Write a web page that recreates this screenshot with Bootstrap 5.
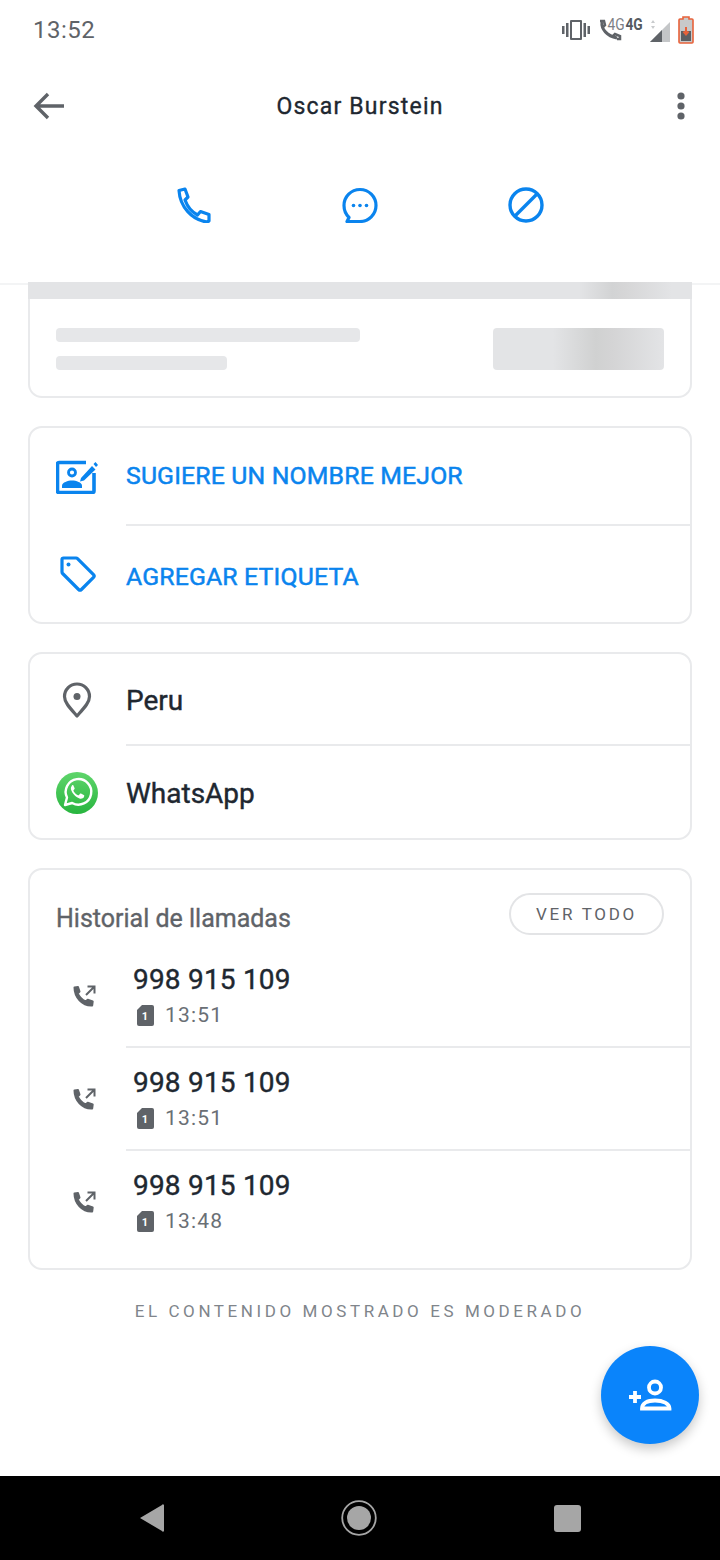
<!DOCTYPE html>
<html lang="es">
<head>
  <meta charset="UTF-8" />
  <meta name="viewport" content="width=device-width, initial-scale=1.0" />
  <title>Oscar Burstein</title>
  <link href="https://cdn.jsdelivr.net/npm/bootstrap@5.3.3/dist/css/bootstrap.min.css" rel="stylesheet" />
  <style>
    html, body { height: 100%; }
    body { width: 720px; height: 1560px; overflow: hidden; font-family: Roboto, "Liberation Sans", sans-serif; color: #202730; background: #fff; }
    .screen { width: 720px; height: 1560px; position: relative; }
    /* barra de estado */
    .status-bar { height: 60px; padding: 0 26px 0 33px; color: #5f6368; }
    .status-time { font-size: 24px; letter-spacing: .5px; }
    .tiny-4g { font-size: 16px; line-height: 1; font-family: Roboto, sans-serif; transform: scaleX(.86); }
    .bold-4g { font-weight: 700; color: #555a60; margin-top: -11px; margin-left: -2px; margin-right: 3px; }
    .thin-4g { margin-top: -10px; margin-left: -16px; margin-right: 0; color: #7c8085; }
    .battery-icon { margin-left: 5px; }
    /* cabecera */
    .top-head { height: 225px; border-bottom: 2px solid #f3f4f5; }
    .title-row { height: 92px; padding: 0 35px 0 33px; }
    .head-side { width: 40px; }
    .contact-name { font-size: 23px; font-weight: 400; -webkit-text-stroke: .35px #202730; letter-spacing: 1.2px; margin: 0 0 0 2px; line-height: 1; }
    .action-row { height: 106px; }
    .action-cell { width: 166px; }
    /* tarjetas */
    .content-area { padding: 0 28px; margin-top: -3px; position: relative; }
    .sheet { border: 2px solid #e9eaec; border-radius: 14px; margin-bottom: 28px; background: #fff; }
    .sheet-skeleton { border-top: 0; border-radius: 0 0 14px 14px; height: 116px; }
    .skel-bar { height: 17px; margin: 0 -2px; background: linear-gradient(90deg, #e3e4e6 83%, #d2d3d4 88%, #d6d6d7 90%, #e3e4e6 97%); }
    .skel-body { padding: 29px 26px 0; }
    .skel-line { height: 14px; border-radius: 4px; background: #e6e7e9; }
    .skel-long { width: 304px; margin-bottom: 14px; }
    .skel-short { width: 171px; }
    .skel-block { width: 171px; height: 42px; border-radius: 4px; background: linear-gradient(90deg, #e3e4e6 35%, #d0d1d1 60%, #d4d4d5 70%, #e3e4e6 100%); }
    .row-icon { width: 96px; padding-left: 26px; flex: none; }
    .row-body { flex-grow: 1; border-bottom: 2px solid #e9eaec; }
    .sheet-row:last-child .row-body { border-bottom: 0; }
    .row-link { height: 98px; }
    .row-link:last-child { height: 96px; }
    .row-link:last-child .row-body { padding-top: 5px; }
    .row-info { height: 92px; }
    .link-blue { color: #0a84ee; font-size: 24.8px; font-weight: 400; -webkit-text-stroke: .5px #0a84ee; letter-spacing: .16px; }
    .info-text { font-size: 28px; color: #202730; font-weight: 400; -webkit-text-stroke: .4px #202730; padding-top: 3px; }
    .row-info:last-child .row-icon svg { margin-top: 2px; }
    /* historial */
    .sheet-calls { padding-bottom: 14px; margin-bottom: 33px; }
    .calls-head { padding: 24px 26px 0; height: 75px; }
    .calls-title { font-size: 25px; color: #5f6368; font-weight: 400; -webkit-text-stroke: .35px #5f6368; margin: 0; line-height: 1; margin-top: 12px; }
    .btn-ver { border: 2px solid #e3e4e6; border-radius: 21px; height: 42px; width: 155px; font-size: 17px; letter-spacing: 2.7px; color: #5f6368; background: #fff; padding: 2px 0 0; margin-top: -1px; }
    .row-call { height: 103px; }
    .call-icon { width: 96px; padding-left: 42px; flex: none; }
    .call-icon svg { margin-top: -2px; }
    .call-body { flex-grow: 1; border-bottom: 2px solid #e9eaec; padding-left: 7px; }
    .row-call:last-child .call-body { border-bottom: 0; }
    .call-number { font-size: 28px; font-weight: 400; -webkit-text-stroke: .4px #202730; letter-spacing: .2px; line-height: 1; color: #202730; padding-top: 21px; }
    .call-time { font-size: 21px; letter-spacing: 1.2px; color: #6a6f75; line-height: 1; margin-top: 11px; }
    .sim-chip { width: 17px; height: 21px; margin-left: 4px; margin-right: 11px; flex: none; }
    .moderated { font-size: 17px; letter-spacing: 3.58px; color: #80858b; text-align: center; line-height: 1; margin: 0; }
    /* boton flotante */
    .fab-add { position: absolute; left: 601px; top: 1346px; width: 98px; height: 98px; border-radius: 50%; background: #0a84fb; border: 0; padding: 0; box-shadow: 0 5px 12px rgba(0,0,0,.22); }
    /* barra de navegacion */
    .nav-bottom { position: absolute; left: 0; right: 0; bottom: 0; height: 84px; background: #000; gap: 177px; }
  </style>
</head>
<body>
  <div class="screen">
    <!-- Barra de estado -->
    <div class="status-bar d-flex align-items-center justify-content-between">
      <span class="status-time">13:52</span>
      <div class="d-flex align-items-center">
        <svg width="28" height="22" viewBox="0 0 28 22" fill="#5f6368"><rect x="0" y="7" width="2.5" height="8"/><rect x="25.5" y="7" width="2.5" height="8"/><rect x="4" y="4" width="2.5" height="14"/><rect x="21.5" y="4" width="2.5" height="14"/><path d="M9 1h10a1 1 0 0 1 1 1v18a1 1 0 0 1-1 1H9a1 1 0 0 1-1-1V2a1 1 0 0 1 1-1zm1 2v16h8V3z" fill-rule="evenodd"/></svg>
        <svg class="ms-2" width="24" height="24" viewBox="0 0 24 24" fill="none" stroke="#5f6368" stroke-width="3"><path d="M4 4c-1 7 5 14 15 16"/><path d="M2 3h4l1 4-2 2M15 18l2-2 5 2v3h-3" stroke-width="2.5"/></svg>
        <span class="tiny-4g thin-4g">4G</span>
        <span class="tiny-4g bold-4g">4G</span>
        <svg width="26" height="26" viewBox="0 0 26 26"><path d="M3 25 23 5v20z" fill="#c4c6c8"/><path d="M3 25 15 13v12z" fill="#5f6368"/><path d="M6 3l2 3H4zM6 12l2-3H4z" fill="#c9cbcd"/></svg>
        <svg class="battery-icon" width="16" height="28" viewBox="0 0 16 28"><path d="M5 1h6v2h3a1 1 0 0 1 1 1v22a1 1 0 0 1-1 1H2a1 1 0 0 1-1-1V4a1 1 0 0 1 1-1h3z" fill="#c8c9ca" stroke="#e8623a" stroke-width="1.6"/><rect x="3" y="15" width="10" height="10" fill="#5c5f63"/><path d="M8 11v7M5.5 15.5 8 18.5l2.5-3" stroke="#e8623a" stroke-width="2" fill="none"/></svg>
      </div>
    </div>

    <!-- Cabecera del contacto -->
    <div class="top-head">
      <div class="title-row d-flex align-items-center justify-content-between">
        <div class="head-side d-flex justify-content-start">
          <svg width="32" height="28" viewBox="0 0 32 28" fill="none" stroke="#5f6368" stroke-width="3.400"><path d="M31 14H3M15 2 3 14l12 12"/></svg>
        </div>
        <h1 class="contact-name">Oscar Burstein</h1>
        <div class="head-side d-flex justify-content-end">
          <svg width="8" height="28" viewBox="0 0 8 28" fill="#5f6368"><circle cx="4" cy="4" r="3.6"/><circle cx="4" cy="14" r="3.6"/><circle cx="4" cy="24" r="3.6"/></svg>
        </div>
      </div>
      <div class="action-row d-flex align-items-center justify-content-center">
        <div class="action-cell d-flex justify-content-center">
          <svg width="34" height="36" viewBox="0 0 34 36" fill="none" stroke="#0a84ee" stroke-width="3.200" stroke-linejoin="round"><path d="M2 3.500 8 2l3 8-3 3c2.500 7 7 12 12.500 15l3-3.500 8.500 3v6.500l-2 1C15 33 3 20 2 3.500z"/></svg>
        </div>
        <div class="action-cell d-flex justify-content-center">
          <svg width="36" height="36" viewBox="0 0 36 36" fill="none" stroke="#0a84ee" stroke-width="3.200"><path d="M5 34.500h13a16 16 0 1 0-16-16c0 5 2 9 5 12z" stroke-linejoin="round"/><g fill="#0a84ee" stroke="none"><circle cx="11.500" cy="18.500" r="1.800"/><circle cx="18" cy="18.500" r="1.800"/><circle cx="24.500" cy="18.500" r="1.800"/></g></svg>
        </div>
        <div class="action-cell d-flex justify-content-center">
          <svg width="36" height="36" viewBox="0 0 36 36" fill="none" stroke="#0a84ee" stroke-width="3.400"><circle cx="18" cy="18" r="16"/><path d="M7 29 29 7"/></svg>
        </div>
      </div>
    </div>

    <div class="content-area">
      <!-- Tarjeta en carga -->
      <div class="sheet sheet-skeleton">
        <div class="skel-bar"></div>
        <div class="skel-body d-flex justify-content-between">
          <div>
            <div class="skel-line skel-long"></div>
            <div class="skel-line skel-short"></div>
          </div>
          <div class="skel-block"></div>
        </div>
      </div>

      <!-- Acciones -->
      <div class="sheet">
        <div class="sheet-row row-link d-flex">
          <div class="row-icon d-flex align-items-center">
            <svg width="42" height="34" viewBox="0 0 42 34" fill="none"><path d="M30 2.500H3a1.500 1.500 0 0 0-1.500 1.500v27A1.500 1.500 0 0 0 3 32.500h33.500a1.500 1.500 0 0 0 1.500-1.500V13" stroke="#0a84ee" stroke-width="3.600"/><circle cx="16" cy="12.500" r="3.500" stroke="#0a84ee" stroke-width="2.800"/><path d="M6 28v-2.500c0-3 6-5 10-5s10 2 10 5V28z" fill="#0a84ee"/><path d="M25 18 36 6l3.500 3.500L28 20.500l-4 1zM37.500 4l2-2 2.500 3-2 2z" fill="#0a84ee"/></svg>
          </div>
          <div class="row-body link-blue d-flex align-items-center">SUGIERE UN NOMBRE MEJOR</div>
        </div>
        <div class="sheet-row row-link d-flex">
          <div class="row-icon d-flex align-items-center">
            <svg class="ms-1" width="36" height="36" viewBox="0 0 36 36" fill="none" stroke="#0a84ee" stroke-width="3.200" stroke-linejoin="round"><path d="M3.500 2h12.500a2 2 0 0 1 1.500.6l16 16a2 2 0 0 1 0 2.800L21.400 33.500a2 2 0 0 1-2.800 0l-16-16A2 2 0 0 1 2 16V3.500A1.500 1.500 0 0 1 3.500 2z"/><circle cx="8.500" cy="8.500" r="2" fill="#0a84ee" stroke="none"/></svg>
          </div>
          <div class="row-body link-blue d-flex align-items-center">AGREGAR ETIQUETA</div>
        </div>
      </div>

      <!-- Informacion -->
      <div class="sheet">
        <div class="sheet-row row-info d-flex">
          <div class="row-icon d-flex align-items-center">
            <svg class="icon-pin" width="42" height="36" viewBox="0 0 42 36" fill="none"><path d="M21 34C14 26 8.500 20.500 8.500 14.500a12.500 12.500 0 0 1 25 0C33.500 20.500 28 26 21 34z" stroke="#5f6368" stroke-width="3.200" stroke-linejoin="round"/><circle cx="21" cy="14.500" r="3.500" fill="#5f6368"/></svg>
          </div>
          <div class="row-body info-text d-flex align-items-center">Peru</div>
        </div>
        <div class="sheet-row row-info d-flex">
          <div class="row-icon d-flex align-items-center">
            <svg width="42" height="42" viewBox="0 0 42 42"><defs><linearGradient id="waGreen" x1="0" y1="0" x2="0" y2="1"><stop offset="0" stop-color="#5fd56b"/><stop offset="1" stop-color="#28b53f"/></linearGradient></defs><circle cx="21" cy="21" r="21" fill="url(#waGreen)"/><path d="M9 33l2-7.500A12.800 12.800 0 1 1 16.200 31z" fill="none" stroke="#fff" stroke-width="2.400" stroke-linejoin="round"/><path d="M16.500 13.500c-1 .5-2 2-1.500 4 1 3.500 4.500 7.500 8.500 9 2 .7 3.800-.3 4.500-1.500.3-.8.300-1.500.2-1.800l-3.200-1.700c-.5-.2-.8 0-1 .3l-1 1.300c-.3.300-.6.300-1 .2-2-.9-3.500-2.400-4.500-4.300-.2-.4 0-.7.200-.9l.8-1c.2-.3.200-.6.100-.9l-1.300-3c-.2-.3-.6-.4-1.800.3z" fill="#fff"/></svg>
          </div>
          <div class="row-body info-text d-flex align-items-center">WhatsApp</div>
        </div>
      </div>

      <!-- Historial de llamadas -->
      <div class="sheet sheet-calls">
        <div class="calls-head d-flex justify-content-between align-items-start">
          <h2 class="calls-title">Historial de llamadas</h2>
          <button type="button" class="btn btn-ver">VER TODO</button>
        </div>
        <div id="callList"></div>
      </div>

      <p class="moderated">EL CONTENIDO MOSTRADO ES MODERADO</p>
    </div>

    <!-- Boton flotante -->
    <button type="button" class="fab-add d-flex align-items-center justify-content-center" aria-label="Agregar contacto">
      <svg width="44" height="32" viewBox="0 0 44 32" fill="none" stroke="#fff" stroke-width="3.800"><path d="M1 18h12M7 12v12"/><circle cx="27" cy="8.500" r="6"/><path d="M14 29.500c0-5 5-8 13-8s14.500 3 14.500 8z"/></svg>
    </button>

    <!-- Barra de navegacion -->
    <div class="nav-bottom d-flex align-items-center justify-content-center">
      <svg width="25" height="28" viewBox="0 0 25 28" fill="#a6a6a6"><path d="M1 14 23 1a1 1 0 0 1 2 1v24a1 1 0 0 1-2 1z"/></svg>
      <svg width="36" height="36" viewBox="0 0 36 36"><circle cx="18" cy="18" r="16.800" fill="none" stroke="#a6a6a6" stroke-width="1.800"/><circle cx="18" cy="18" r="12" fill="#a6a6a6"/></svg>
      <svg width="27" height="27" viewBox="0 0 27 27"><rect width="27" height="27" rx="3" fill="#a6a6a6"/></svg>
    </div>
  </div>

  <script src="https://cdn.jsdelivr.net/npm/bootstrap@5.3.3/dist/js/bootstrap.bundle.min.js"></script>
  <script>
    // Filas del historial
    const calls = ["13:51", "13:51", "13:48"];
    document.getElementById("callList").innerHTML = calls.map(function (hora) {
      return `
        <div class="row-call d-flex">
          <div class="call-icon d-flex align-items-center">
            <svg width="24" height="24" viewBox="0 0 24 24" fill="none" stroke="#5f6368"><path d="M2.500 3.500 6 3l1.500 4.500-1.800 2c1.500 3.500 4.500 6.500 8 8l2-1.800 5 1.800-.5 4C10 22 2.500 13 2.500 3.500z" fill="#5f6368" stroke-width="2" stroke-linejoin="round"/><path d="M14 11 22 3M15.500 2.500H22.500V9.500" stroke-width="2"/></svg>
          </div>
          <div class="call-body">
            <div class="call-number">998 915 109</div>
            <div class="call-time d-flex align-items-center">
              <svg class="sim-chip" viewBox="0 0 17 21"><path d="M5 0h10a2 2 0 0 1 2 2v17a2 2 0 0 1-2 2H2a2 2 0 0 1-2-2V5z" fill="#5f6368"/><text x="8.500" y="15" font-size="11" font-weight="700" text-anchor="middle" fill="#fff" font-family="Roboto, sans-serif">1</text></svg>
              <span>${hora}</span>
            </div>
          </div>
        </div>`;
    }).join("");
  </script>
</body>
</html>
